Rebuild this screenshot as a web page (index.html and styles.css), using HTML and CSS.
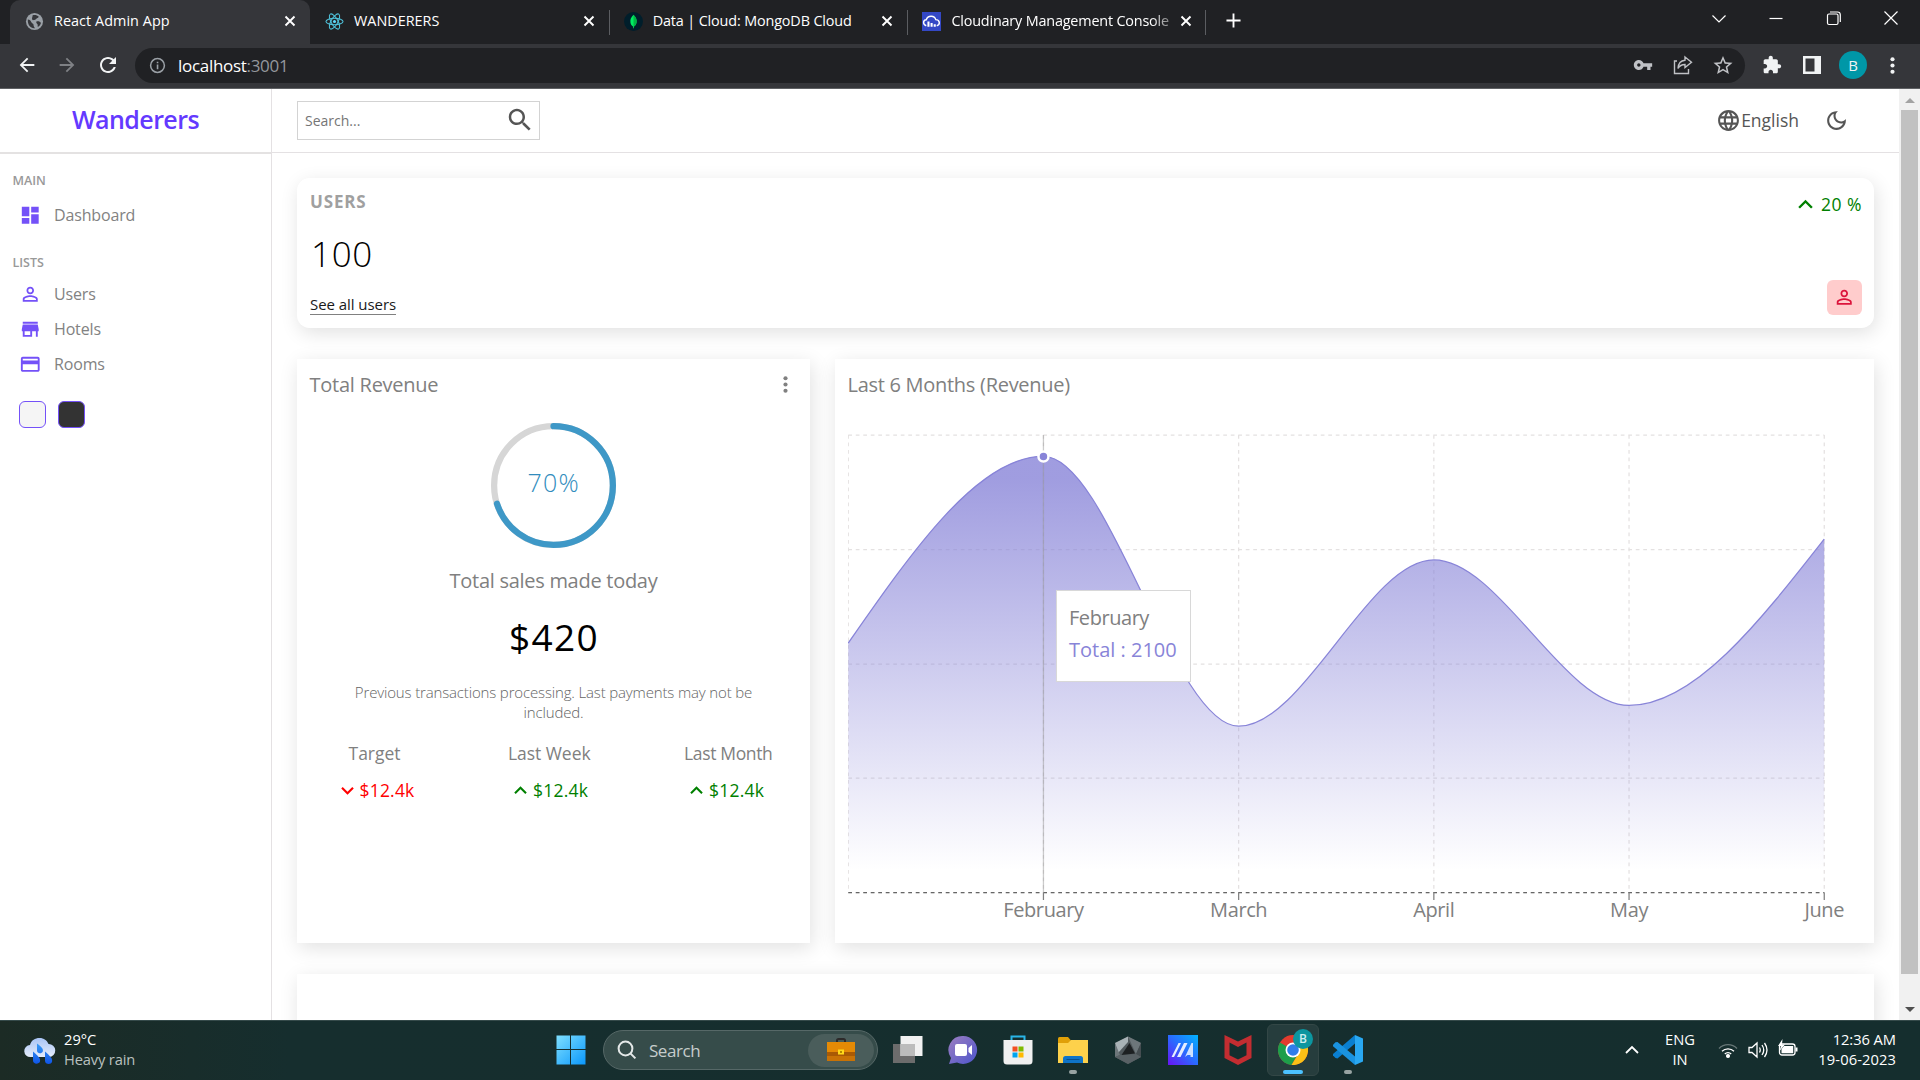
FILE: index.html
```html
<!DOCTYPE html>
<html lang="en">
<head>
<meta charset="utf-8">
<title>React Admin App</title>
<link rel="stylesheet" href="styles.css">
</head>
<body>
<svg class="sprite" aria-hidden="true">
  <symbol id="close" viewBox="0 0 12 12"><path d="M1.5 1.5l9 9M10.500 1.500l-9 9" stroke="currentColor" stroke-width="1.900" fill="none"/></symbol>
  <symbol id="back" viewBox="0 0 24 24"><path d="M20 11H7.830l5.590-5.590L12 4l-8 8 8 8 1.410-1.410L7.830 13H20v-2z"/></symbol>
  <symbol id="up" viewBox="0 0 24 24"><path d="M7.410 15.410 12 10.830l4.590 4.580L18 14l-6-6-6 6z"/></symbol>
  <symbol id="down" viewBox="0 0 24 24"><path d="M7.410 8.590 12 13.170l4.590-4.580L18 10l-6 6-6-6z"/></symbol>
  <symbol id="more" viewBox="0 0 24 24"><circle cx="12" cy="6" r="2"/><circle cx="12" cy="12" r="2"/><circle cx="12" cy="18" r="2"/></symbol>
  <symbol id="person" viewBox="0 0 24 24"><path d="M12 5.900c1.160 0 2.100.940 2.100 2.100s-.940 2.100-2.100 2.100S9.900 9.160 9.900 8s.940-2.100 2.100-2.100m0 9c2.970 0 6.100 1.460 6.100 2.100v1.100H5.900V17c0-.640 3.130-2.100 6.100-2.100M12 4C9.790 4 8 5.790 8 8s1.790 4 4 4 4-1.790 4-4-1.790-4-4-4zm0 9c-2.670 0-8 1.340-8 4v3h16v-3c0-2.660-5.330-4-8-4z"/></symbol>
</svg>

<header class="browser">
  <div class="tabs">
    <div class="tab active">
      <svg class="fav" viewBox="0 0 20 20"><circle cx="10" cy="10" r="9" fill="#9aa0a6"/><path d="M3 8c2 .5 3 1 3.500 2.500S9 12 9 13.500s.5 2.500 1.500 3.500C6 17.500 2.500 14 3 8zM8 3.500c2-.8 5-.3 6.500 1.500-.5 1.500-2 1-2.500 2s-2 1-3 1.500S7 7.500 7.500 6 8 4.500 8 3.500zM12 10c2-.5 4 0 4.800 1.500-.5 2-1.800 3.500-3.300 4.200-.5-1.500.3-2-.5-3s-1.500-1.500-1-2.700z" fill="#35363a"/></svg>
      <span class="tab-title">React Admin App</span>
      <svg class="x"><use href="#close"/></svg>
    </div>
    <div class="tab">
      <svg class="fav" viewBox="0 0 20 20"><g fill="none" stroke="#4fc3dc" stroke-width="1.100"><ellipse cx="10" cy="10" rx="9" ry="3.500"/><ellipse cx="10" cy="10" rx="9" ry="3.500" transform="rotate(60 10 10)"/><ellipse cx="10" cy="10" rx="9" ry="3.500" transform="rotate(120 10 10)"/></g><circle cx="10" cy="10" r="1.600" fill="#61dafb"/></svg>
      <span class="tab-title wide">WANDERERS</span>
      <svg class="x"><use href="#close"/></svg>
    </div>
    <div class="tab divided">
      <svg class="fav" viewBox="0 0 20 20"><circle cx="10" cy="10" r="10" fill="#001e2b"/><path d="M10 3c2.800 3 3.600 5 3.200 8-.3 2-1.400 3.300-2.700 4.300L10.300 17h-.6l-.2-1.700C8.200 14.300 7 13 6.800 11 6.400 8 7.200 6 10 3z" fill="#00ed64"/><path d="M10 3v14h.3l.2-1.700c1.300-1 2.400-2.300 2.700-4.300C13.600 8 12.800 6 10 3z" fill="#00b545"/></svg>
      <span class="tab-title data">Data | Cloud: MongoDB Cloud</span>
      <svg class="x"><use href="#close"/></svg>
    </div>
    <div class="tab divided last">
      <svg class="fav" viewBox="0 0 20 20"><path d="M0 0h20v20H0z" fill="#3448c5"/><path d="M4.500 14.500C.5 13 1 8.500 4.500 8.200 6 3.500 13 3.200 14.500 8c4.500.2 5 5.500 1 6.500" fill="none" stroke="#fff" stroke-width="1.500"/><path d="M5.700 10h2.200v5.500H5.700zM9 11.500h2.200v4H9zM12.300 12.800h2.200v2.700h-2.200z" fill="#fff"/></svg>
      <span class="tab-title faded">Cloudinary Management Console</span>
      <svg class="x"><use href="#close"/></svg>
    </div>
    <svg class="plus" viewBox="0 0 16 16"><path d="M8 .5v15M.5 8h15" stroke="#fff" stroke-width="2"/></svg>
    <div class="window-buttons">
      <svg viewBox="0 0 16 16"><path d="M1.500 5.500L8 12l6.500-6.500"/></svg>
      <svg viewBox="0 0 16 16"><path d="M1.500 8.500h13"/></svg>
      <svg viewBox="0 0 16 16"><rect x="1.500" y="4" width="10.500" height="10.500" rx="1.500"/><path d="M4 2h7.500q2.800 0 2.800 2.800V12"/></svg>
      <svg viewBox="0 0 16 16"><path d="M1.500 1.500l13 13M14.500 1.500l-13 13"/></svg>
    </div>
  </div>
  <div class="toolbar">
    <svg class="nav-icon"><use href="#back"/></svg>
    <svg class="nav-icon forward"><use href="#back"/></svg>
    <svg class="nav-icon" viewBox="0 0 24 24"><path d="M17.650 6.350C16.200 4.900 14.210 4 12 4c-4.420 0-7.990 3.580-7.990 8s3.570 8 7.990 8c3.730 0 6.840-2.550 7.730-6h-2.080c-.820 2.330-3.040 4-5.650 4-3.310 0-6-2.690-6-6s2.690-6 6-6c1.660 0 3.140.690 4.220 1.780L13 11h7V4l-2.350 2.350z"/></svg>
    <div class="address">
      <svg class="info" viewBox="0 0 18 18"><circle cx="9" cy="9" r="7.300" fill="none" stroke="#9aa0a6" stroke-width="1.600"/><path d="M8.200 8h1.700v5H8.200zM8.200 5h1.700v1.700H8.200z" fill="#9aa0a6"/></svg>
      <span class="url">localhost<span class="port">:3001</span></span>
      <svg class="addr-icon key" viewBox="0 0 24 24"><path d="M12.650 10C11.830 7.670 9.610 6 7 6c-3.310 0-6 2.690-6 6s2.690 6 6 6c2.610 0 4.830-1.670 5.650-4H17v4h4v-4h2v-4H12.650zM7 14c-1.100 0-2-.9-2-2s.9-2 2-2 2 .9 2 2-.9 2-2 2z"/></svg>
      <svg class="addr-icon" viewBox="0 0 20 20"><path d="M4 6H1.500v12.500h14V14M12 2l6.500 5.200L12 12.500V9.500c-3.500 0-5.500 1.300-7 4 .3-5 2.800-8 7-8.300z" fill="none" stroke="currentColor" stroke-width="1.400"/></svg>
      <svg class="addr-icon" viewBox="1.500 1 21 21"><path d="M22 9.240l-7.190-.620L12 2 9.190 8.630 2 9.240l5.460 4.730L5.820 21 12 17.270 18.180 21l-1.630-7.030L22 9.240zM12 15.400l-3.760 2.270 1-4.280-3.320-2.880 4.380-.380L12 6.100l1.710 4.040 4.380.380-3.320 2.880 1 4.280L12 15.400z"/></svg>
    </div>
    <svg class="ext" viewBox="0 0 24 24"><path d="M20.500 11H19V7c0-1.100-.9-2-2-2h-4V3.500C13 2.120 11.880 1 10.500 1S8 2.120 8 3.500V5H4c-1.100 0-1.990.9-1.990 2v3.800H3.500c1.490 0 2.700 1.210 2.700 2.700s-1.210 2.700-2.700 2.700H2V20c0 1.100.9 2 2 2h3.800v-1.500c0-1.490 1.210-2.700 2.700-2.700 1.490 0 2.700 1.210 2.700 2.700V22H17c1.100 0 2-.9 2-2v-4h1.500c1.380 0 2.500-1.120 2.500-2.500S21.880 11 20.500 11z"/></svg>
    <svg class="panel" viewBox="0 0 18 18"><path d="M0 0h18v18H0zM2.500 2.500v13h9v-13z" fill-rule="evenodd"/></svg>
    <span class="avatar">B</span>
    <svg class="menu"><use href="#more"/></svg>
  </div>
</header>

<div class="viewport">
  <aside class="sidebar">
    <div class="brand">Wanderers</div>
    <p class="group">MAIN</p>
    <ul class="links">
      <li><svg viewBox="0 0 24 24"><path d="M3 13h8V3H3v10zm0 8h8v-6H3v6zm10 0h8V11h-8v10zm0-18v6h8V3h-8z"/></svg><span>Dashboard</span></li>
    </ul>
    <p class="group second">LISTS</p>
    <ul class="links list">
      <li><svg><use href="#person"/></svg><span>Users</span></li>
      <li><svg viewBox="0 0 24 24"><path d="M20 4H4v2h16V4zm1 10v-2l-1-5H4l-1 5v2h1v6h10v-6h4v6h2v-6h1zm-9 4H6v-4h6v4z"/></svg><span>Hotels</span></li>
      <li><svg viewBox="0 0 24 24"><path d="M20 4H4c-1.110 0-1.990.890-1.990 2L2 18c0 1.110.890 2 2 2h16c1.110 0 2-.890 2-2V6c0-1.110-.890-2-2-2zm0 14H4v-6h16v6zm0-10H4V6h16v2z"/></svg><span>Rooms</span></li>
    </ul>
    <div class="themes"><span class="swatch light"></span><span class="swatch dark"></span></div>
  </aside>

  <main class="main">
    <nav class="navbar">
      <div class="search"><span>Search...</span>
        <svg viewBox="0 0 24 24"><path d="M15.500 14h-.790l-.280-.270C15.410 12.590 16 11.110 16 9.500 16 5.910 13.090 3 9.500 3S3 5.910 3 9.500 5.910 16 9.500 16c1.610 0 3.090-.590 4.230-1.570l.270.280v.790l5 4.990L20.490 19l-4.990-5zm-6 0C7.010 14 5 11.990 5 9.500S7.010 5 9.500 5 14 7.010 14 9.500 11.990 14 9.500 14z"/></svg>
      </div>
      <div class="nav-items">
        <svg viewBox="0 0 24 24"><path d="M11.990 2C6.470 2 2 6.480 2 12s4.470 10 9.990 10C17.520 22 22 17.520 22 12S17.520 2 11.990 2zm6.930 6h-2.950c-.320-1.250-.780-2.450-1.380-3.560 1.840.630 3.370 1.910 4.330 3.560zM12 4.040c.830 1.200 1.480 2.530 1.910 3.960h-3.820c.430-1.430 1.080-2.760 1.910-3.960zM4.260 14C4.100 13.360 4 12.690 4 12s.1-1.360.260-2h3.380c-.080.660-.140 1.320-.140 2 0 .680.060 1.340.140 2H4.260zm.820 2h2.950c.320 1.250.780 2.450 1.380 3.560-1.840-.630-3.370-1.900-4.330-3.560zm2.950-8H5.080c.960-1.660 2.490-2.930 4.330-3.560C8.810 5.550 8.350 6.750 8.030 8zM12 19.960c-.830-1.200-1.480-2.530-1.910-3.960h3.820c-.430 1.430-1.080 2.760-1.910 3.960zM14.340 14H9.660c-.090-.660-.160-1.320-.160-2 0-.680.070-1.350.160-2h4.680c.090.650.160 1.320.160 2 0 .680-.070 1.340-.160 2zm.250 5.560c.6-1.110 1.060-2.310 1.380-3.560h2.950c-.960 1.650-2.490 2.930-4.330 3.560zM16.360 14c.080-.660.140-1.320.140-2 0-.680-.060-1.340-.140-2h3.380c.160.640.260 1.310.260 2s-.1 1.360-.260 2h-3.380z"/></svg>
        <span class="language">English</span>
        <svg class="moon" viewBox="0 0 24 24"><path d="M9.370 5.510c-.180.640-.270 1.310-.270 1.990 0 4.080 3.320 7.400 7.400 7.400.680 0 1.350-.090 1.990-.270C17.450 17.190 14.930 19 12 19c-3.860 0-7-3.140-7-7 0-2.930 1.810-5.450 4.370-6.490zM12 3c-4.970 0-9 4.030-9 9s4.030 9 9 9 9-4.030 9-9c0-.460-.040-.920-.1-1.360-.980 1.370-2.580 2.260-4.400 2.260-2.980 0-5.400-2.420-5.400-5.400 0-1.810.890-3.420 2.260-4.400-.440-.060-.9-.1-1.360-.1z"/></svg>
      </div>
    </nav>

    <section class="card widget">
      <div class="widget-left">
        <span class="widget-title">USERS</span>
        <span class="widget-count">100</span>
        <a class="widget-link">See all users</a>
      </div>
      <div class="widget-right">
        <span class="percent"><svg><use href="#up"/></svg>20 %</span>
        <span class="badge"><svg><use href="#person"/></svg></span>
      </div>
    </section>

    <div class="charts">
      <section class="card revenue">
        <div class="card-head"><h2 class="rev-title">Total Revenue</h2><svg><use href="#more"/></svg></div>
        <svg class="ring" viewBox="0 0 100 100">
          <circle cx="50" cy="50" r="47.500" stroke="#d6d6d6"/>
          <circle cx="50" cy="50" r="47.500" stroke="#3e98c7" stroke-linecap="round" pathLength="100" stroke-dasharray="70 100" transform="rotate(-90 50 50)"/>
          <text x="50.200" y="55.300" text-anchor="middle">70%</text>
        </svg>
        <p class="sales-label">Total sales made today</p>
        <p class="amount">$420</p>
        <p class="note">Previous transactions processing. Last payments may not be included.</p>
        <div class="summary">
          <div><span class="label">Target</span><span class="value negative"><svg><use href="#down"/></svg>$12.4k</span></div>
          <div><span class="label">Last Week</span><span class="value"><svg><use href="#up"/></svg>$12.4k</span></div>
          <div><span class="label month">Last Month</span><span class="value"><svg><use href="#up"/></svg>$12.4k</span></div>
        </div>
      </section>

      <section class="card chart">
        <h2 class="chart-title">Last 6 Months (Revenue)</h2>
        <svg class="plot" viewBox="0.250 0 1014 532">
          <defs><linearGradient id="total" x1="0" y1="0" x2="0" y2="1"><stop offset=".05" stop-color="#8884d8" stop-opacity=".8"/><stop offset=".95" stop-color="#8884d8" stop-opacity="0"/></linearGradient></defs>
          <path class="grid" d="M.5 37H976.500M.5 151.500H976.500M.5 266H976.500M.5 380H976.500M.5 494.500H976.500M.5 37V494.500M195.700 37V494.500M390.900 37V494.500M586.100 37V494.500M781.300 37V494.500M976.500 37V494.500"/>
          <path class="axis" d="M.5 494.500H976.500"/>
          <path class="tick" d="M195.700 494.500v7.500M390.900 494.500v7.500M586.100 494.500v7.500M781.300 494.500v7.500M976.500 494.500v7.500"/>
          <path fill="url(#total)" d="M.5 245.100C65.600 151.500 130.600 58.300 195.700 58.300S325.800 328.200 390.900 328.200 521 161.900 586.100 161.900 716.200 307.400 781.300 307.400 911.400 224.300 976.500 141.100V494.500H.5z"/>
          <path class="line" d="M.5 245.100C65.600 151.500 130.600 58.300 195.700 58.300S325.800 328.200 390.900 328.200 521 161.900 586.100 161.900 716.200 307.400 781.300 307.400 911.400 224.300 976.500 141.100"/>
          <path class="cursor" d="M195.700 37V494.500"/>
          <circle cx="195.700" cy="58.500" r="5" fill="#8884d8" stroke="#fff" stroke-width="2.500"/>
          <g class="months"><text x="195.700" y="518.700">February</text><text x="390.900" y="518.700">March</text><text x="586.100" y="518.700">April</text><text x="781.300" y="518.700">May</text><text x="976.500" y="518.700">June</text></g>
        </svg>
        <div class="tooltip"><p>February</p><p class="series">Total : 2100</p></div>
      </section>
    </div>

    <section class="card transactions"></section>
  </main>

  <div class="scrollbar"><span class="arrow-up"></span><span class="thumb"></span><span class="arrow-down"></span></div>
</div>

<footer class="taskbar">
  <div class="weather">
    <svg viewBox="0 0 32 30"><defs><linearGradient id="cl" x1="0" y1="0" x2="0" y2="1"><stop stop-color="#a9c4f5"/><stop offset="1" stop-color="#e4ecfb"/></linearGradient><linearGradient id="dr" x1="0" y1="0" x2="0" y2="1"><stop stop-color="#3a9bf5"/><stop offset="1" stop-color="#0f55e8"/></linearGradient></defs><path d="M6.500 21a6 6 0 0 1-.5-12C7.500 4 11 2 15.500 2c4.500 0 7.500 2.500 9 6a6.500 6.500 0 0 1 .5 13z" fill="url(#cl)"/><path d="M13 7.500c5 3.500 6.500 5.500 5.800 8-1 2.500-5.800 2.500-5.800-1zM9 15.500c5 4.500 7.800 6.500 7 10-1 3-7 3-7-1zM21 15.500c5 4.500 8 7 7 10.500-1 3-7 2.500-7-1z" fill="url(#dr)"/></svg>
    <div><span class="temp">29°C</span><span class="desc">Heavy rain</span></div>
  </div>
  <div class="apps">
    <span class="app"><svg viewBox="0 0 30 30"><defs><linearGradient id="wn" x1="0" y1="0" x2="1" y2="1"><stop stop-color="#7fe0ff"/><stop offset="1" stop-color="#0a97fb"/></linearGradient></defs><path d="M.5.5H14V14H.5zM15 .5h14.500V14H15zM.5 15H14v14.500H.5zM15 15h14.500v14.500H15z" fill="url(#wn)"/></svg></span>
    <div class="task-search">
      <svg viewBox="0 0 20 20"><circle cx="8.500" cy="8.500" r="6.900"/><path d="M13.400 13.400l5 5"/></svg>
      <span>Search</span>
      <div class="doodle"><svg viewBox="0 0 28 24"><path d="M10 4V2.500Q10 1 11.500 1h5Q18 1 18 2.500V4" fill="none" stroke="#2d2a2a" stroke-width="2"/><path d="M0 4h28v10H0z" fill="#e58a05"/><path d="M0 14h28v9H0z" fill="#a95a05"/><path d="M0 18h28v5H0z" fill="#c87206"/><path d="M11 11.500h6v5h-6z" fill="#ffd91a"/><path d="M13 13h2v2h-2z" fill="#b88a00"/></svg></div>
    </div>
    <span class="app"><svg viewBox="0 0 30 30"><path d="M0 9h22v19H0z" fill="#6c6c6c"/><path d="M7.500 1h22v20h-22z" fill="#f1f1f1"/><path d="M7.500 9H22v12H7.500z" fill="#bcbcbc"/></svg></span>
    <span class="app"><svg viewBox="0 0 30 30"><defs><linearGradient id="ch" x1="0" y1="0" x2="1" y2="1"><stop stop-color="#9c7ec0"/><stop offset="1" stop-color="#4d55cd"/></linearGradient></defs><path d="M15 1a14 14 0 1 1-6 26.600L1 29l2-6A14 14 0 0 1 15 1z" fill="url(#ch)"/><rect x="7" y="9" width="12" height="12" rx="2" fill="#fff"/><path d="M20.500 13l3.500-3v10l-3.500-3z" fill="#fff"/></svg></span>
    <span class="app"><svg viewBox="0 0 30 30"><path d="M8.500 6V1.500h13V6" fill="none" stroke="#29b5e8" stroke-width="2"/><path d="M.5 5h29v21q0 3.500-3.500 3.500H4Q.5 29.500.5 26z" fill="#f0f0f0"/><path d="M9.500 11.500h5v5h-5z" fill="#f25022"/><path d="M15.500 11.500h5v5h-5z" fill="#7fba00"/><path d="M9.500 17.500h5v5h-5z" fill="#00a4ef"/><path d="M15.500 17.500h5v5h-5z" fill="#ffb900"/></svg></span>
    <span class="app running"><svg viewBox="0 0 30 30"><path d="M0 3.500Q0 2 1.500 2H10l3 3.500V10H0z" fill="#e0a008"/><path d="M0 8h10l3-3h17v23H0z" fill="#fdd14b"/><path d="M5 28v-4.500Q5 21 7.500 21h15q2.500 0 2.500 2.500V28z" fill="#0f74c8"/><path d="M8.500 24.500h13" stroke="#09508f"/></svg></span>
    <span class="app"><svg viewBox="0 0 30 30"><path d="M15 1.500l13 6.500v14l-13 7-13-7V8z" fill="#50585c"/><path d="M15 1.500L28 8l-5 11z" fill="#6d767a"/><path d="M28 8v14l-5-3z" fill="#454d51"/><path d="M2 8l13-6.500V7L5 18z" fill="#a9b2b6"/><path d="M2 8v14l5-2z" fill="#6d767a"/><path d="M2 22l5-2 16-1 5 3-13 7z" fill="#596165"/><path d="M16.500 8l5.500 10.500L8.500 20z" fill="#1d2022"/></svg></span>
    <span class="app"><svg viewBox="0 0 30 30"><defs><linearGradient id="ma" x1="0" y1="1" x2="1" y2="0"><stop stop-color="#6a12f5"/><stop offset=".5" stop-color="#2a6bff"/><stop offset="1" stop-color="#00b4ff"/></linearGradient></defs><path d="M0 0h30v30H0z" fill="url(#ma)"/><path d="M3.500 22L10.500 8H13L6 22zM9 22l7-14h3.500l-7 14z" fill="#e4edff"/><path d="M17 22L23.500 8H25v14h-2.500v-2h-3z" fill="#cfe2ff"/></svg></span>
    <span class="app"><svg viewBox="0 0 30 30"><path d="M1.500 0L15 6.500 28.500 0v23L15 30 1.500 23z" fill="#c42d31"/><path d="M6.500 7.500L15 12l8.500-4.500v12.800L15 24.500l-8.500-4.200z" fill="#152e2e"/></svg></span>
    <span class="app current"><svg viewBox="0 0 30 30"><circle cx="15" cy="15" r="15" fill="#e33b2e"/><path d="M2 7.500A15 15 0 0 0 13.500 30l6.500-11-5-4z" fill="#1e9e4a"/><path d="M29 9.500A15 15 0 0 1 13.500 30L21.500 17l-2-7.500z" fill="#fbc116"/><circle cx="15" cy="15" r="7.500" fill="#fff"/><circle cx="15" cy="15" r="5.800" fill="#2f7de9"/></svg><b class="profile">B</b></span>
    <span class="app running"><svg viewBox="0 0 30 30"><path d="M22 0l8 3.500v23L22 30z" fill="#29a8f2"/><path d="M22 0v8.500L4.500 23.500 2.500 23 0 20.500v-1.500z" fill="#0a7fd0"/><path d="M22 30v-8.500L4.500 7 2.500 7.300 0 9.800v1.500z" fill="#1a93e0"/></svg></span>
  </div>
  <div class="tray">
    <svg class="tray-up" viewBox="0 0 16 16"><path d="M2 11l6-6 6 6"/></svg>
    <div class="lang"><span>ENG</span><span>IN</span></div>
    <svg class="wifi" viewBox="0 0 20 20"><path d="M1 8.500a12.500 12.500 0 0 1 18 0" opacity=".35"/><path d="M4 11.300a8.500 8.500 0 0 1 12 0M6.800 14a4.500 4.500 0 0 1 6.400 0"/><circle cx="10" cy="16" r="1.400" fill="#fff"/></svg>
    <svg class="sound" viewBox="0 0 20 20"><path d="M1 7.500h3L9 3v14l-5-4.500H1zM11.500 7.500q1.500 2.500 0 5M14 5q3.500 5 0 10M16.500 3q5 7 0 14"/></svg>
    <svg class="battery" viewBox="0 0 20 20"><rect x="1.500" y="5" width="15.500" height="11" rx="2.500"/><path d="M6 7h9.200v7.200H3.500V10zM17.500 8.500h2v4h-2z" fill="#fff" stroke="none"/><path d="M4.500 0L0 7h3L1.500 12 7 5.500H4z" fill="#fff" stroke="none"/></svg>
    <div class="clock"><span>12:36 AM</span><span class="date">19-06-2023</span></div>
  </div>
</footer>
</body>
</html>
```
FILE: styles.css
```css
* { box-sizing: border-box; margin: 0; padding: 0; }
body { width: 1920px; height: 1080px; overflow: hidden; display: flex; flex-direction: column; font-family: "Open Sans", "Noto Sans", sans-serif; background: #fff; }
svg { display: block; flex: none; fill: currentColor; }
ul { list-style: none; }
.sprite { position: absolute; width: 0; height: 0; }

/* Browser frame */
.browser { height: 89px; flex: none; background: #202124; color: #fff; }
.tabs { height: 44px; display: flex; padding-left: 10px; }
.tab { width: 298.700px; height: 44px; display: flex; align-items: center; padding: 0 14px 9px 15px; font-size: 14.400px; white-space: nowrap; }
.tab.active { background: #35363a; border-radius: 10px 10px 0 0; width: 300px; }
.tab.divided { position: relative; }
.tab.divided::before, .tab.last::after { content: ""; position: absolute; left: 0; top: 10px; width: 1px; height: 25px; background: #5b5d61; }
.tab.last::after { left: auto; right: 0; }
.fav { width: 19px; height: 19px; margin-top: 7px; }
.tab-title { flex: 1; margin: 6px 6px 0 10px; line-height: 22px; letter-spacing: .050px; }
.tab-title.wide { letter-spacing: 0; }
.tab-title.data { letter-spacing: -.140px; }
.tab-title.faded { letter-spacing: -.180px; margin-right: 2px; -webkit-mask-image: linear-gradient(90deg, #000 88%, transparent 102%); mask-image: linear-gradient(90deg, #000 88%, transparent 102%); }
.x { width: 12px; height: 12px; margin-top: 7px; }
.plus { width: 15px; height: 15px; margin: 13px 0 0 20px; }
.window-buttons { margin-left: auto; display: flex; gap: 41.500px; padding: 10px 21px 0 0; }
.window-buttons svg { width: 16px; height: 16px; fill: none; stroke: #fff; stroke-width: 1.200; }
.toolbar { height: 45px; background: #35363a; border-bottom: 1px solid #5f6164; display: flex; align-items: center; padding: 0 0 2px 16px; color: #f1f3f4; }
.nav-icon { width: 22px; height: 22px; margin-right: 18px; }
.nav-icon.forward { transform: scaleX(-1); color: #7f8185; }
.nav-icon:nth-child(3) { margin-right: 15px; width: 24px; height: 24px; }
.address { width: 1610px; height: 35px; border-radius: 18px; background: #202124; display: flex; align-items: center; padding: 0 12px 0 14px; color: #c0c2c6; }
.info { width: 17px; height: 17px; }
.url { flex: 1; margin-left: 12px; font-size: 17px; letter-spacing: -.300px; color: #fff; }
.port { color: #94979c; }
.addr-icon { width: 20px; height: 20px; margin-left: 20px; }
.ext { width: 20px; height: 20px; margin-left: 17px; }
.panel { width: 18px; height: 18px; margin-left: 21px; }
.avatar { width: 28px; height: 28px; margin-left: 18px; border-radius: 50%; background: #0097a7; font-size: 15px; line-height: 28px; text-align: center; }
.menu { width: 25px; height: 25px; margin-left: 12.500px; }

/* App shell */
.viewport { height: 931px; display: flex; overflow: hidden; }
.sidebar { width: 272px; flex: none; border-right: 1px solid #e4e1e3; }
.brand { height: 65px; border-bottom: 2px solid #e4e2e2; color: #6439ff; font-size: 25px; font-weight: 600; letter-spacing: -.550px; line-height: 61px; text-align: center; }
.group { margin: 19px 0 9px 12.500px; color: #999; font-size: 12.500px; font-weight: 600; line-height: 16px; }
.group.second { margin: 22px 0 6px 12.500px; }
.links { padding-left: 18.500px; }
.links li { height: 35px; display: flex; align-items: center; gap: 13px; color: #828282; font-size: 16px; font-weight: 500; letter-spacing: -.150px; }
.links li span { margin-top: -1px; }
.links svg { width: 22.500px; height: 22.500px; color: #7451f8; }
.themes { display: flex; gap: 12px; margin: 19px 0 0 19px; }
.swatch { width: 27px; height: 27px; border: 1px solid #7451f8; border-radius: 6px; }
.swatch.light { background: #f5f5f5; }
.swatch.dark { background: #333; }

.main { width: 1627px; flex: none; }
.navbar { height: 64px; border-bottom: 1px solid #e4e1e3; display: flex; align-items: center; justify-content: space-between; padding: 0 50px 0 25px; color: #555; }
.search { width: 243px; height: 39px; border: 1px solid #d3d3d3; display: flex; align-items: center; justify-content: space-between; padding: 0 4px 0 7px; font-size: 14px; color: #757575; }
.search svg { width: 30px; height: 30px; color: #555; margin-top: -2px; }
.nav-items { display: flex; align-items: center; font-size: 17.500px; }
.nav-items svg { width: 25px; height: 25px; }
.nav-items .language { margin-top: -2px; }
.nav-items .moon { margin-left: 25px; }

.card { background: #fff; box-shadow: 2px 5px 19px rgba(0, 0, 0, .12); }
.widget { width: 1577px; height: 150px; margin: 25px 0 0 25px; padding: 12px; border-radius: 12.500px; display: flex; justify-content: space-between; }
.widget-left, .widget-right { display: flex; flex-direction: column; justify-content: space-between; }
.widget-left { align-items: flex-start; padding: 0 1px 1px; }
.widget-right { align-items: flex-end; padding: 2px 0 1px; }
.widget-title { color: #a0a0a0; font-size: 17px; font-weight: 700; line-height: 24px; letter-spacing: .850px; }
.widget-count { margin-left: 1px; font-size: 35px; font-weight: 300; line-height: 46px; letter-spacing: .700px; }
.widget-link { border-bottom: 1px solid gray; color: #1a1a1a; font-size: 15px; line-height: 20px; letter-spacing: -.050px; }
.percent { display: flex; align-items: center; gap: 1px; color: green; font-size: 17.500px; line-height: 25px; letter-spacing: .500px; }
.percent svg { width: 29px; height: 29px; margin: -3px 0; }
.badge { width: 35px; height: 35px; border-radius: 6px; background: #fcc; color: crimson; display: grid; place-items: center; }
.badge svg { width: 22.500px; height: 22.500px; }

.charts { display: grid; grid-template-columns: 513px 1039px; gap: 25px; margin: 31px 0 0 25px; }
.charts .card { height: 584px; padding: 11px 12.500px; }
.charts h2 { color: gray; font-size: 20px; font-weight: 400; line-height: 29px; margin-bottom: -1px; }
.rev-title { letter-spacing: -.250px; }
.revenue { display: flex; flex-direction: column; align-items: center; color: gray; text-align: center; }
.card-head { width: 100%; height: 28px; display: flex; align-items: center; justify-content: space-between; }
.card-head svg { width: 25px; height: 25px; }
.ring { width: 125px; height: 125px; margin-top: 25px; fill: none; stroke-width: 5; }
.ring text { fill: #318cbd; stroke: none; font-size: 20px; font-weight: 300; letter-spacing: 1px; }
.sales-label { margin-top: 19px; font-size: 20px; line-height: 28px; letter-spacing: -.280px; }
.amount { margin-top: 17px; padding-left: 1px; color: #000; font-size: 37px; line-height: 50px; letter-spacing: 1.400px; }
.note { width: 438px; margin-top: 20px; color: #646464; font-size: 15px; font-weight: 300; line-height: 20px; letter-spacing: -.150px; }
.summary { width: 438px; margin-top: 19px; display: flex; justify-content: space-between; font-size: 17.500px; line-height: 24px; }
.label { display: block; letter-spacing: -.050px; }
.label.month { letter-spacing: -.350px; }
.value { display: flex; align-items: center; margin-top: 13px; color: green; letter-spacing: .200px; }
.value.negative { color: red; }
.value svg { width: 25px; height: 25px; margin: -1px 0; }

.chart { position: relative; }
.chart-title { letter-spacing: -.280px; }
.plot { width: 1014px; height: 532px; fill: none; }
.grid { stroke: #e4e1e1; stroke-width: 1.250; stroke-dasharray: 3.750; }
.axis { stroke: #666; stroke-width: 1.250; stroke-dasharray: 3.750; }
.tick { stroke: #808080; stroke-width: 1.250; }
.line { stroke: #8884d8; stroke-width: 1.250; }
.cursor { stroke: #999; stroke-opacity: .5; stroke-width: 1.250; }
.months { fill: gray; font-size: 20px; text-anchor: middle; letter-spacing: -.400px; }
.tooltip { position: absolute; left: 220.500px; top: 231px; width: 135.500px; height: 91.500px; padding: 11px 12.500px; border: 1.500px solid #d8d8d8; background: #fff; color: gray; font-size: 20px; line-height: 32px; letter-spacing: -.450px; }
.tooltip .series { color: #8884d8; letter-spacing: 0; }

.transactions { width: 1577px; height: 120px; margin: 31px 0 0 25px; }

.scrollbar { width: 21px; flex: none; background: #f1f1f1; display: flex; flex-direction: column; align-items: center; }
.arrow-up, .arrow-down { border: 5px solid transparent; border-top: 0; border-bottom: 5px solid #a3a3a3; margin-top: 9px; }
.thumb { width: 17px; height: 864px; margin-top: 7px; background: #c1c1c1; }
.arrow-down { border-bottom: 0; border-top: 5px solid #505050; margin-top: 33px; }

/* Taskbar */
.taskbar { height: 60px; flex: none; display: grid; grid-template-columns: 543.500px 1fr 320px; background: linear-gradient(90deg, #1c2b25, #162e2e 15%, #152e2e); border-top: 1px solid #354a4a; color: #fff; font-size: 14.700px; }
.weather { display: flex; align-items: center; gap: 8px; padding: 0 0 3px 24px; }
.weather svg { width: 32px; height: 30px; margin-top: 3px; }
.weather span { display: block; line-height: 20px; }
.weather .desc { color: #b9c0bf; letter-spacing: -.150px; }
.apps { display: flex; align-items: center; padding-bottom: 1px; }
.app { position: relative; width: 55px; height: 50px; flex: none; display: grid; place-items: center; }
.app svg { width: 30px; height: 30px; }
.task-search { width: 275px; height: 40px; margin: 0 2px 0 4.500px; border: 1px solid #566867; border-radius: 20px; background: #364c4a; display: flex; align-items: center; padding: 0 3px 0 13px; color: #c6cdcc; font-size: 17px; letter-spacing: -.450px; }
.task-search > svg { width: 20px; height: 20px; fill: none; stroke: #e4e8e8; stroke-width: 2; }
.task-search > span { flex: 1; margin-left: 12px; }
.doodle { width: 66px; height: 33px; border-radius: 17px; background: #4a5d5b; display: grid; place-items: center; }
.doodle svg { width: 28px; height: 24px; }
.running::after, .current::after { content: ""; position: absolute; bottom: 1px; width: 8px; height: 4px; border-radius: 2px; background: #98a3a2; }
.current::after { width: 20px; background: #4cc2ff; }
.current::before { content: ""; position: absolute; width: 50px; height: 50px; border: 1px solid #334746; border-radius: 6px; background: #263d3d; }
.current svg { position: relative; }
.profile { position: absolute; left: 28px; top: 4px; width: 20px; height: 20px; border-radius: 50%; background: #0c96a0; color: #cdeef0; font-size: 12px; font-weight: 600; line-height: 20px; text-align: center; }
.tray { display: flex; align-items: center; justify-content: flex-end; padding: 0 24px 3px 0; }
.tray svg { fill: none; stroke: #fff; stroke-width: 1.300; margin-top: 1px; }
.tray-up { width: 16px; height: 16px; }
.tray .tray-up path { stroke-width: 1.800; }
.lang, .clock { line-height: 20px; }
.lang { width: 34px; margin: 0 21px 0 23px; text-align: center; }
.lang span, .clock span { display: block; }
.wifi, .sound, .battery { width: 20px; height: 20px; margin-right: 10px; }
.tray .battery { margin: -1px 0 0; }
.clock { width: 98px; text-align: right; letter-spacing: -.050px; }
.clock .date { letter-spacing: .100px; }
```
